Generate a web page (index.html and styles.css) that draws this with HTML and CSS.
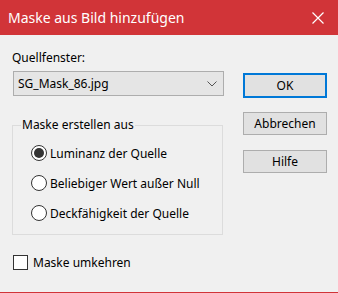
FILE: index.html
```html
<!DOCTYPE html>
<html lang="de">
<head>
  <meta charset="UTF-8" />
  <title>Maske aus Bild hinzufügen</title>
  <link rel="stylesheet" href="styles.css">
</head>
<body>
  <div class="dialog">
    <div class="titlebar">
      <span class="title">Maske aus Bild hinzufügen</span>
      <svg class="close" width="12" height="12" viewBox="0 0 12 12">
        <path d="M0.5 0.5 L11.5 11.5 M11.5 0.5 L0.5 11.5" stroke="#fff" stroke-width="1.2" fill="none"/>
      </svg>
    </div>

    <div class="content">
      <div class="left">
        <div class="label">Quellfenster:</div>
        <div class="combo">
          <span>SG_Mask_86.jpg</span>
          <svg class="chevron" width="10" height="6" viewBox="0 0 10 6">
            <path d="M0.5 0.5 L5 5 L9.5 0.5" stroke="#555" stroke-width="1" fill="none"/>
          </svg>
        </div>

        <fieldset class="group">
          <legend>Maske erstellen aus</legend>
          <div class="radio-row"><span class="radio checked"></span>Luminanz der Quelle</div>
          <div class="radio-row"><span class="radio"></span>Beliebiger Wert außer Null</div>
          <div class="radio-row"><span class="radio"></span>Deckfähigkeit der Quelle</div>
        </fieldset>

        <div class="check-row"><span class="checkbox"></span>Maske umkehren</div>
      </div>

      <div class="buttons">
        <button class="btn btn-default">OK</button>
        <button class="btn">Abbrechen</button>
        <button class="btn">Hilfe</button>
      </div>
    </div>
  </div>
</body>
</html>
```

FILE: styles.css
```css
body {
  margin: 0;
  font-family: 'Noto Sans', sans-serif;
  font-size: 12px;
  color: #000;
  background: #f0f0f0;
}
.dialog {
  width: 338px;
  height: 293px;
  box-sizing: border-box;
  border-bottom: 1px solid #d13438;
  background: #f0f0f0;
}
.titlebar {
  height: 35px;
  background: #d13438;
  display: flex;
  align-items: center;
  justify-content: space-between;
  padding: 0 14px 0 8px;
}
.title {
  color: #fff;
  font-size: 14px;
}
.content {
  display: flex;
  padding-left: 12px;
}
.left {
  width: 212px;
}
.label {
  margin-top: 15px;
  line-height: 16px;
}
.combo {
  margin: 5px 0 0 1px;
  height: 25px;
  box-sizing: border-box;
  border: 1px solid #adadad;
  background: #e5e5e5;
  display: flex;
  align-items: center;
  justify-content: space-between;
  padding: 0 6px 0 4px;
}
.group {
  margin: 21px 0 0;
  padding: 5px 0 0 18px;
  width: 211px;
  height: 118px;
  box-sizing: border-box;
  border: 1px solid #dcdcdc;
}
.group legend {
  padding: 0 1px;
  margin-left: -10px;
  line-height: 16px;
}
.radio-row {
  display: flex;
  align-items: center;
  height: 30px;
  gap: 3px;
}
.radio {
  width: 16px;
  height: 16px;
  box-sizing: border-box;
  border: 1px solid #333;
  border-radius: 50%;
  background: #fff;
  display: flex;
  align-items: center;
  justify-content: center;
}
.radio.checked::after {
  content: '';
  width: 10px;
  height: 10px;
  border-radius: 50%;
  background: #333;
}
.check-row {
  display: flex;
  align-items: center;
  gap: 5px;
  margin-top: 19px;
  margin-left: 1px;
}
.checkbox {
  width: 15px;
  height: 15px;
  box-sizing: border-box;
  border: 1px solid #333;
  background: #fff;
}
.buttons {
  display: flex;
  flex-direction: column;
  margin-left: 19px;
  padding-top: 38px;
}
.btn {
  width: 84px;
  height: 23px;
  margin-bottom: 15px;
  border: 1px solid #adadad;
  background: #e1e1e1;
  font-family: inherit;
  font-size: 12px;
  color: #000;
  padding: 0;
}
.btn-default {
  height: 25px;
  border: 2px solid #0078d7;
  margin-bottom: 14px;
}
```
